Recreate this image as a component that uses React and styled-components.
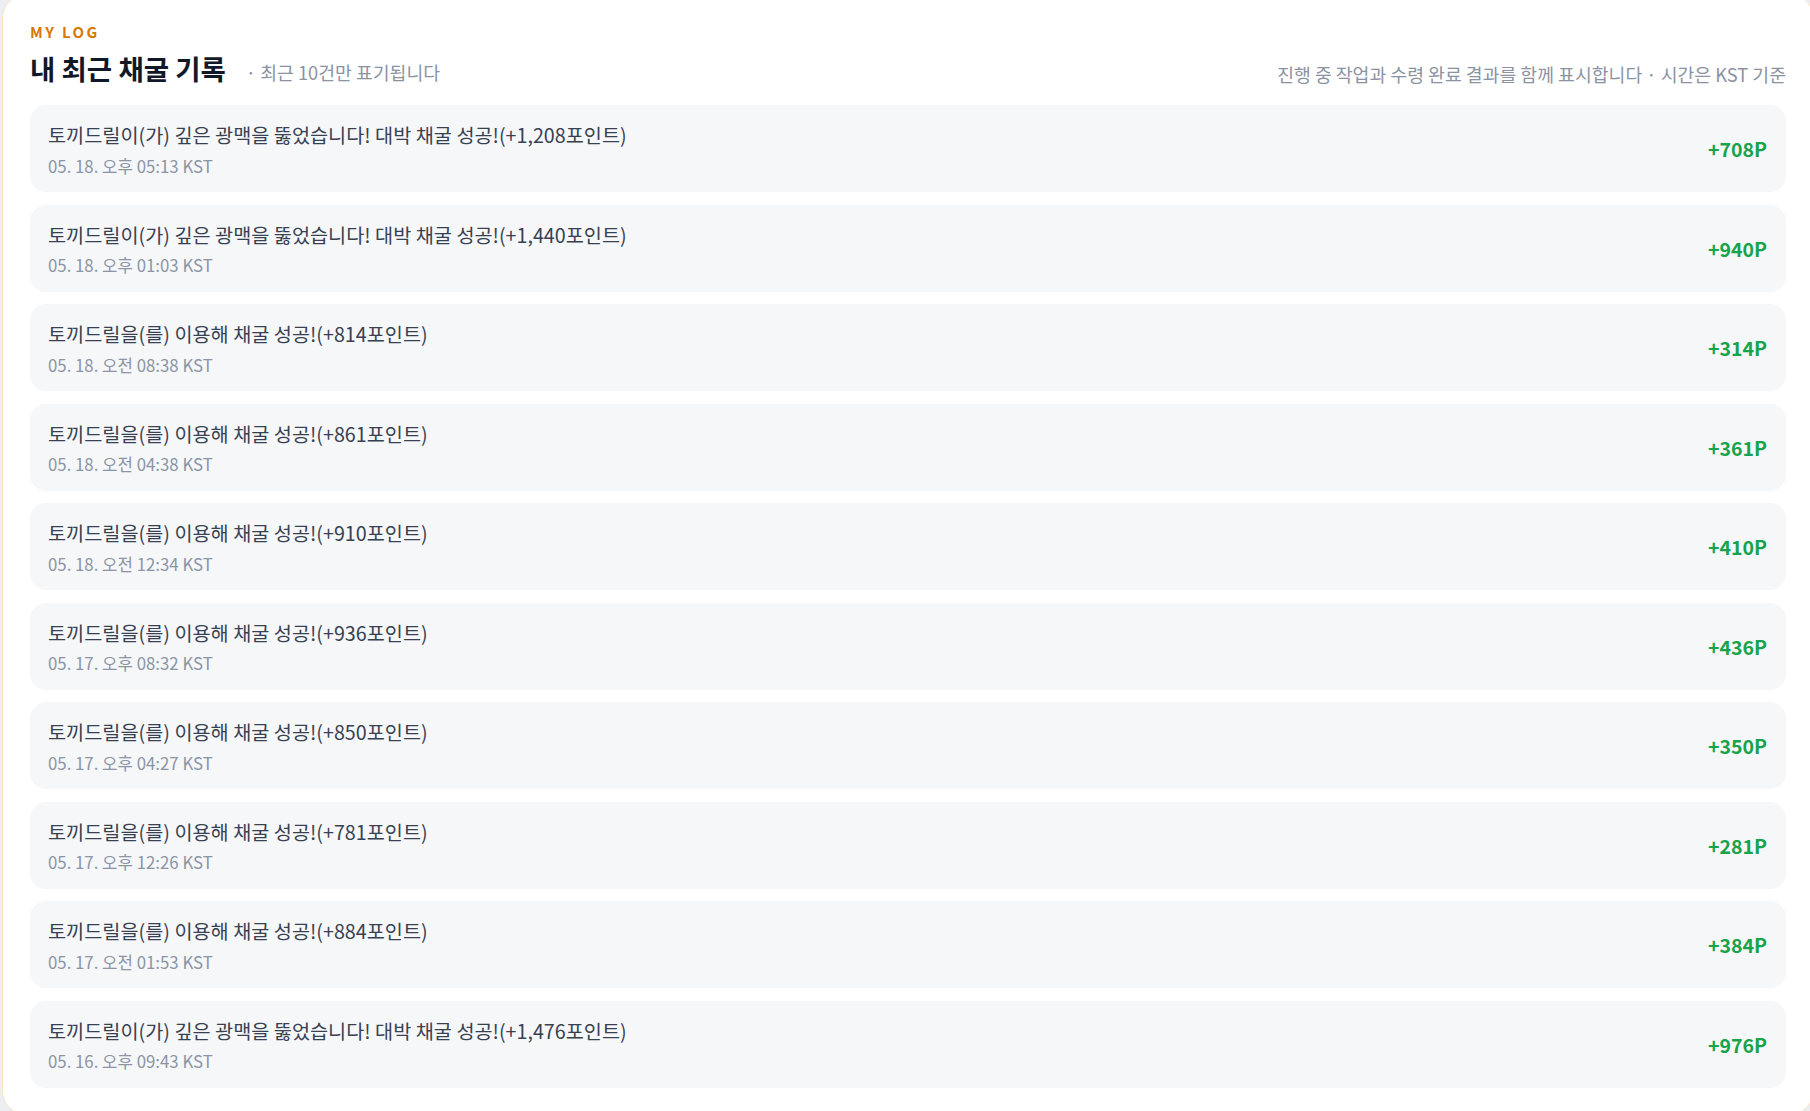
import React from "react";
import styled, { createGlobalStyle } from "styled-components";

const GlobalStyle = createGlobalStyle`
  html, body {
    margin: 0;
    padding: 0;
    overflow: hidden;
    background: #eceef2;
  }
  body {
    font-family: "Noto Sans CJK KR", "Noto Sans", sans-serif;
  }
`;

const Page = styled.div`
  padding-left: 2px;
  margin-top: -6px;
  margin-right: -4px;
`;

const Card = styled.section`
  background: #ffffff;
  border: 1px solid #fbe3c4;
  border-radius: 24px;
  padding: 28px 27px 26px;
  box-sizing: border-box;
`;

const Eyebrow = styled.div`
  font-size: 15px;
  line-height: 18px;
  font-weight: 700;
  letter-spacing: 0.16em;
  color: #d97706;
`;

const HeaderRow = styled.div`
  display: flex;
  justify-content: space-between;
  align-items: baseline;
  margin-top: 10px;
`;

const TitleGroup = styled.div`
  display: flex;
  align-items: baseline;
  gap: 20px;
`;

const Title = styled.h2`
  margin: 0;
  font-size: 27.5px;
  line-height: 34px;
  font-weight: 700;
  color: #111827;
`;

const Note = styled.span`
  font-size: 18.3px;
  color: #8a93a2;
`;

const HeaderMeta = styled.span`
  align-self: flex-end;
  font-size: 18.3px;
  line-height: 22px;
  color: #8a93a2;
`;

const List = styled.ul`
  list-style: none;
  margin: 20px 0 0;
  padding: 0;
  display: flex;
  flex-direction: column;
  gap: 12.5px;
`;

const Row = styled.li`
  display: flex;
  align-items: center;
  justify-content: space-between;
  background: #f6f7f9;
  border-radius: 16px;
  padding: 16px 19px 15.5px 18px;
`;

const RowText = styled.div`
  display: flex;
  flex-direction: column;
  gap: 6.5px;
`;

const RowTitle = styled.div`
  font-size: 19.7px;
  line-height: 27px;
  color: #374151;
`;

const RowDate = styled.div`
  font-size: 16.8px;
  line-height: 22px;
  color: #8b95a5;
`;

const Points = styled.div`
  font-size: 19.5px;
  font-weight: 700;
  color: #16a34a;
`;

const BIG = "토끼드릴이(가) 깊은 광맥을 뚫었습니다! 대박 채굴 성공!";
const NORMAL = "토끼드릴을(를) 이용해 채굴 성공!";

const logs = [
  { text: `${BIG}(+1,208포인트)`, date: "05. 18. 오후 05:13 KST", pts: "+708P" },
  { text: `${BIG}(+1,440포인트)`, date: "05. 18. 오후 01:03 KST", pts: "+940P" },
  { text: `${NORMAL}(+814포인트)`, date: "05. 18. 오전 08:38 KST", pts: "+314P" },
  { text: `${NORMAL}(+861포인트)`, date: "05. 18. 오전 04:38 KST", pts: "+361P" },
  { text: `${NORMAL}(+910포인트)`, date: "05. 18. 오전 12:34 KST", pts: "+410P" },
  { text: `${NORMAL}(+936포인트)`, date: "05. 17. 오후 08:32 KST", pts: "+436P" },
  { text: `${NORMAL}(+850포인트)`, date: "05. 17. 오후 04:27 KST", pts: "+350P" },
  { text: `${NORMAL}(+781포인트)`, date: "05. 17. 오후 12:26 KST", pts: "+281P" },
  { text: `${NORMAL}(+884포인트)`, date: "05. 17. 오전 01:53 KST", pts: "+384P" },
  { text: `${BIG}(+1,476포인트)`, date: "05. 16. 오후 09:43 KST", pts: "+976P" },
];

export default function App() {
  return (
    <>
      <GlobalStyle />
      <Page>
        <Card>
          <Eyebrow>MY LOG</Eyebrow>
          <HeaderRow>
            <TitleGroup>
              <Title>내 최근 채굴 기록</Title>
              <Note>· 최근 10건만 표기됩니다</Note>
            </TitleGroup>
            <HeaderMeta>진행 중 작업과 수령 완료 결과를 함께 표시합니다 · 시간은 KST 기준</HeaderMeta>
          </HeaderRow>
          <List>
            {logs.map((l, i) => (
              <Row key={i}>
                <RowText>
                  <RowTitle>{l.text}</RowTitle>
                  <RowDate>{l.date}</RowDate>
                </RowText>
                <Points>{l.pts}</Points>
              </Row>
            ))}
          </List>
        </Card>
      </Page>
    </>
  );
}
